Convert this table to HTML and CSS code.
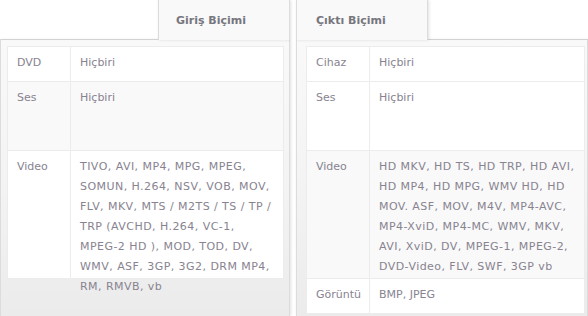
FILE: index.html
```html
<!DOCTYPE html>
<html lang="tr">
<head>
<meta charset="utf-8">
<title>Biçimler</title>
<link rel="stylesheet" href="styles.css">
</head>
<body>
<div class="page">
  <section class="pane pane-in">
    <div class="tabs">
      <div class="tab-fill"></div>
      <div class="tab">Giriş Biçimi</div>
    </div>
    <div class="pane-body">
      <table class="fmt">
        <tr class="r-short"><td class="k">DVD</td><td class="v">Hiçbiri</td></tr>
        <tr class="r-mid alt"><td class="k">Ses</td><td class="v">Hiçbiri</td></tr>
        <tr class="r-tall"><td class="k">Video</td><td class="v"><div class="clip">TIVO, AVI, MP4, MPG, MPEG, SOMUN, H.264, NSV, VOB, MOV, FLV, MKV, MTS / M2TS / TS / TP / TRP (AVCHD, H.264, VC-1, MPEG-2 HD ), MOD, TOD, DV, WMV, ASF, 3GP, 3G2, DRM MP4, RM, RMVB, vb</div></td></tr>
      </table>
    </div>
  </section>
  <section class="pane pane-out">
    <div class="tabs">
      <div class="tab">Çıktı Biçimi</div>
      <div class="tab-fill"></div>
    </div>
    <div class="pane-body">
      <table class="fmt">
        <tr class="r-short"><td class="k">Cihaz</td><td class="v">Hiçbiri</td></tr>
        <tr class="r-mid"><td class="k">Ses</td><td class="v">Hiçbiri</td></tr>
        <tr class="r-tall alt"><td class="k">Video</td><td class="v"><div class="clip">HD MKV, HD TS, HD TRP, HD AVI, HD MP4, HD MPG, WMV HD, HD MOV. ASF, MOV, M4V, MP4-AVC, MP4-XviD, MP4-MC, WMV, MKV, AVI, XviD, DV, MPEG-1, MPEG-2, DVD-Video, FLV, SWF, 3GP vb</div></td></tr>
        <tr class="r-short"><td class="k">Görüntü</td><td class="v">BMP, JPEG</td></tr>
      </table>
    </div>
  </section>
</div>
</body>
</html>
```
FILE: styles.css
```css
html, body {
  margin: 0;
  padding: 0;
  background: #fff;
}

body {
  font-family: "DejaVu Sans", Verdana, sans-serif;
  font-size: 11px;
  color: #888390;
  height: 316px;
  overflow: hidden;
}

.page {
  display: flex;
  gap: 6px;
  height: 316px;
}

.pane {
  display: flex;
  flex-direction: column;
}

.pane-in { width: 290px; }
.pane-out { width: 292px; }

.tabs {
  display: flex;
  height: 40px;
  flex: none;
}

.tab-fill {
  flex: 1;
  border-bottom: 1px solid #dcdcdc;
  box-shadow: 0 1px 1px rgba(0, 0, 0, 0.05);
}

.tab {
  width: 132px;
  box-sizing: border-box;
  background: #f9f9f9;
  border-left: 1px solid #dcdcdc;
  border-right: 1px solid #dcdcdc;
  box-shadow: 1px 0 3px rgba(0, 0, 0, 0.12);
  display: flex;
  align-items: center;
  padding-left: 17px;
  font-weight: bold;
  color: #76767e;
  position: relative;
  z-index: 1;
}

.pane-out .tab {
  padding-left: 19px;
}

.pane-body {
  flex: 1;
  background: linear-gradient(#f9f9f9, #f3f3f3 55%, #ebebeb);
  border-left: 1px solid #dcdcdc;
  border-right: 1px solid #dcdcdc;
  box-shadow: 1px 0 3px rgba(0, 0, 0, 0.12);
  padding: 6px 5px 0 6px;
}

.pane-out .pane-body {
  padding: 6px 2px 0 9px;
}

.fmt {
  width: 100%;
  border-collapse: collapse;
  background: #fff;
  table-layout: fixed;
}

.fmt td {
  border: 1px solid #ececec;
  vertical-align: top;
  padding: 6px 8px 0 9px;
  line-height: 20px;
}

.fmt td.k {
  width: 45px;
}

.fmt tr.alt td {
  background: #f9f9f9;
}

.r-short td { height: 28px; }
.r-mid td { height: 62px; }
.r-tall td { height: 121px; }

/* long format lists: wider tracking, text may run past the row */
.clip {
  height: 121px;
  overflow: visible;
  letter-spacing: 0.45px;
}
```
